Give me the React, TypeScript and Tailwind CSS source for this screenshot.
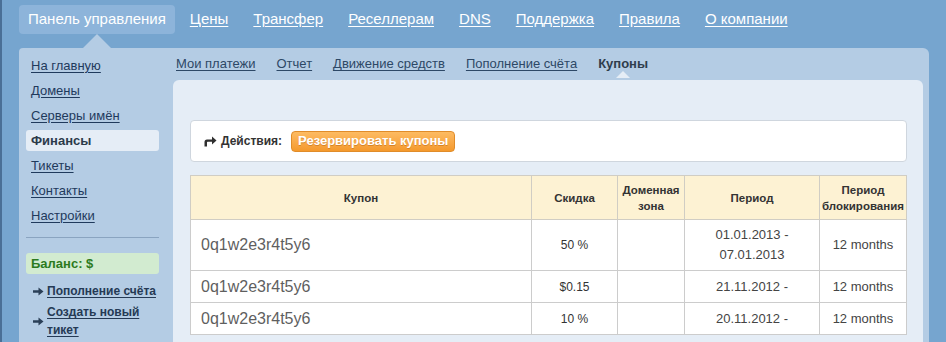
import React from "react";

const topLinks = ["Цены", "Трансфер", "Реселлерам", "DNS", "Поддержка", "Правила", "О компании"];
const sideLinks = ["На главную", "Домены", "Серверы имён", "Финансы", "Тикеты", "Контакты", "Настройки"];
const subLinks = ["Мои платежи", "Отчет", "Движение средств", "Пополнение счёта"];

function ArrowRight() {
  return (
    <svg width="11" height="9" viewBox="0 0 11 9" className="shrink-0">
      <path d="M0 3.2 H5.5 V0.5 L10.5 4.5 L5.5 8.5 V5.8 H0 Z" fill="#2a3f57" />
    </svg>
  );
}

function ShareIcon() {
  return (
    <svg width="13" height="11" viewBox="0 0 13 11" className="shrink-0">
      <path d="M0.5 10.5 V6 Q0.5 3.5 3 3.5 H8 V0.5 L12.5 4.5 L8 8.5 V5.8 H3.6 Q3 5.8 3 6.4 V10.5 Z" fill="#2f2f2f" />
    </svg>
  );
}

type Row = { code: string; disc: string; period: string[]; block: string; h: string };
const rows: Row[] = [
  { code: "0q1w2e3r4t5y6", disc: "50 %", period: ["01.01.2013 -", "07.01.2013"], block: "12 months", h: "h-[51px]" },
  { code: "0q1w2e3r4t5y6", disc: "$0.15", period: ["21.11.2012 -"], block: "12 months", h: "h-[32px]" },
  { code: "0q1w2e3r4t5y6", disc: "10 %", period: ["20.11.2012 -"], block: "12 months", h: "h-[32px]" },
];

export default function App() {
  return (
    <div className="w-[946px] h-[342px] overflow-hidden bg-[#76a5cf] border-l-2 border-[#4a6f96] font-['Liberation_Sans',Arial,sans-serif]">
      {/* Top nav */}
      <div className="h-[48px] pt-[5px] pl-[17px] flex items-start">
        <div className="relative h-[29px] px-[9px] flex items-center rounded-[4px] bg-[#8db4da] text-white text-[15px]">
          Панель управления
          <div className="absolute left-1/2 -translate-x-1/2 top-[29px] w-0 h-0 border-l-[14px] border-r-[14px] border-b-[14px] border-l-transparent border-r-transparent border-b-[#b4cce4]" />
        </div>
        <div className="flex items-center h-[29px] ml-[15px] gap-[25px]">
          {topLinks.map((l) => (
            <span key={l} className="text-white text-[15px] underline underline-offset-[2px]">
              {l}
            </span>
          ))}
        </div>
      </div>

      {/* Main panel */}
      <div className="ml-[17px] w-[910px] h-[294px] bg-[#b4cce4] rounded-tr-[6px] rounded-tl-[4px] flex">
        {/* Sidebar */}
        <div className="w-[154px] shrink-0 pt-[7px] pl-[7px] pr-[14px]">
          {sideLinks.map((l) => (
            <div
              key={l}
              className={
                l === "Финансы"
                  ? "h-[21px] mb-[4px] px-[5px] flex items-center rounded-[3px] bg-[#e5edf6] text-[13px] font-bold text-[#2b3a4a]"
                  : "h-[21px] mb-[4px] px-[5px] flex items-center text-[13px] text-[#1f3a5c] underline underline-offset-[2px]"
              }
            >
              {l}
            </div>
          ))}
          <div className="mt-[11px] h-px bg-[#8aa4c0]" />
          <div className="mt-[15px] h-[21px] px-[5px] flex items-center rounded-[3px] bg-[#d2ebd0] text-[13px] font-bold text-[#2c7a1e]">
            Баланс: $
          </div>
          <div className="mt-[8px] pl-[7px] flex items-center gap-[3px] text-[12px] font-bold text-[#253a55]">
            <ArrowRight />
            <span className="underline underline-offset-[2px]">Пополнение счёта</span>
          </div>
          <div className="mt-[3px] pl-[7px] flex items-center gap-[3px] text-[12px] font-bold text-[#253a55]">
            <ArrowRight />
            <span className="underline underline-offset-[2px] leading-[18px]">
              Создать новый
              <br />
              тикет
            </span>
          </div>
        </div>

        {/* Content column */}
        <div className="flex-1 flex flex-col pr-[8px]">
          <div className="h-[32px] flex items-center pl-[3px] gap-[21px] text-[13px]">
            {subLinks.map((l) => (
              <span key={l} className="text-[#2d4866] underline underline-offset-[2px]">
                {l}
              </span>
            ))}
            <span className="relative font-bold text-[#2f3d4c]">
              Купоны
              <div className="absolute left-1/2 -translate-x-1/2 top-[17px] w-0 h-0 border-l-[7px] border-r-[7px] border-b-[7px] border-l-transparent border-r-transparent border-b-[#e5edf6]" />
            </span>
          </div>
          <div className="flex-1 bg-[#e5edf6] rounded-t-[6px] pt-[40px] pl-[17px] pr-[16px]">
            {/* Actions */}
            <div className="h-[42px] bg-white border border-[#cfd6de] rounded-[4px] flex items-center pl-[13px]">
              <ShareIcon />
              <span className="ml-[4px] text-[12px] font-bold text-[#333]">Действия:</span>
              <span className="ml-[9px] h-[21px] px-[6px] flex items-center rounded-[4px] border border-[#e08c2a] bg-gradient-to-b from-[#fdbb62] to-[#f4992b] text-white text-[13px] font-bold [text-shadow:0_1px_0_rgba(180,100,20,0.5)]">
                Резервировать купоны
              </span>
            </div>

            {/* Table */}
            <table className="mt-[13px] w-[716px] border-collapse table-fixed text-[#333]">
              <colgroup>
                <col className="w-[341px]" />
                <col className="w-[86px]" />
                <col className="w-[67px]" />
                <col className="w-[135px]" />
                <col className="w-[87px]" />
              </colgroup>
              <thead>
                <tr className="h-[44px] bg-[#fdf2d3] text-[11.5px] font-bold leading-[16px]">
                  <th className="border border-[#d0cdc4] font-bold">Купон</th>
                  <th className="border border-[#d0cdc4] font-bold">Скидка</th>
                  <th className="border border-[#d0cdc4] font-bold align-top pt-[6px]">
                    Доменная
                    <br />
                    зона
                  </th>
                  <th className="border border-[#d0cdc4] font-bold">Период</th>
                  <th className="border border-[#d0cdc4] font-bold whitespace-nowrap">
                    Период
                    <br />
                    блокирования
                  </th>
                </tr>
              </thead>
              <tbody className="bg-white">
                {rows.map((r, i) => (
                  <tr key={i} className={r.h}>
                    <td className="border border-[#cccccc] pl-[10px] text-[16px] text-[#5f5f5f]">{r.code}</td>
                    <td className="border border-[#cccccc] text-center text-[12px] text-[#333]">{r.disc}</td>
                    <td className="border border-[#cccccc]" />
                    <td className="border border-[#cccccc] text-center text-[13px] text-[#444] leading-[20px]">
                      {r.period.map((p, j) => (
                        <div key={j}>{p}</div>
                      ))}
                    </td>
                    <td className="border border-[#cccccc] text-center text-[13px] text-[#444]">{r.block}</td>
                  </tr>
                ))}
              </tbody>
            </table>
          </div>
        </div>
      </div>
    </div>
  );
}
